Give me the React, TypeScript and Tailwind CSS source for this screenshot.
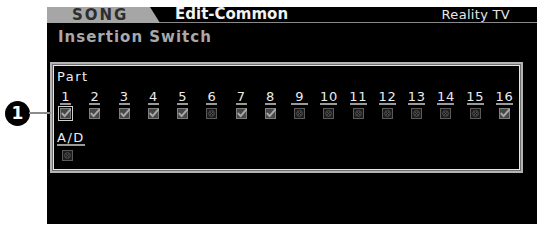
import React from "react";

const F = { fontFamily: '"DejaVu Sans", "Liberation Sans", sans-serif' };

function Check({ on, sel }: { on: boolean; sel?: boolean }) {
  return (
    <div className={sel ? "p-[1px] border-[1.5px] border-[#cfcfcf]" : "p-[1px]"}>
      <svg width="11" height="11" viewBox="0 0 11 11" className="block">
        {on ? (
          <>
            <rect x="0.5" y="0.5" width="10" height="10" fill="#474747" stroke="#7e7e7e" strokeWidth="1" />
            <path d="M2.4 5.6 L4.6 8.2 L10.4 1.4" fill="none" stroke="#a8a8a8" strokeWidth="1.9" strokeLinecap="round" strokeLinejoin="round" />
          </>
        ) : (
          <>
            <rect x="0.5" y="0.5" width="10" height="10" fill="#1c1c1c" stroke="#5a5a5a" strokeWidth="1" />
            <circle cx="5.5" cy="5.5" r="2.8" fill="none" stroke="#555" strokeWidth="1" />
            <path d="M4 4 L7 7 M7 4 L4 7" stroke="#555" strokeWidth="0.8" />
          </>
        )}
      </svg>
    </div>
  );
}

const parts = [1, 1, 1, 1, 1, 0, 1, 1, 0, 0, 0, 0, 0, 0, 0, 1];

export default function App() {
  return (
    <div className="relative w-[537px] h-[228px] bg-white overflow-hidden" style={F}>
      {/* callout */}
      <div className="absolute left-[5px] top-[101px] w-[25px] h-[25px] rounded-full bg-black flex items-center justify-center text-white font-bold text-[17px] leading-none">
        1
      </div>
      <div className="absolute left-[29px] top-[112px] w-[22px] h-[2px] bg-[#8c8c8c]" />

      <div className="ml-[47px] pt-[7px]">
        <div className="w-[490px] h-[217px] bg-black flex flex-col">
          {/* header */}
          <div className="h-[16px] flex items-stretch border-b border-[#8a8a8a]">
            <div className="w-[113px] h-[16px] bg-[#a6a6a6] [clip-path:polygon(0_0,103px_0,113px_100%,0_100%)] pl-[25px] text-[15px] leading-[16px] font-bold tracking-[2px] text-[#2e2e2e]">
              SONG
            </div>
            <div className="ml-[15px] text-[15px] leading-[15px] font-bold text-[#f2f2f2]">Edit-Common</div>
            <div className="ml-auto pr-[27px] text-[13px] leading-[15px] text-[#e6e6e6] tracking-[0.3px]">Reality TV</div>
          </div>

          <div className="mt-[7px] pl-[11px] text-[15px] leading-[15px] font-bold tracking-[1px] text-[#a9a9a9]">
            Insertion Switch
          </div>

          {/* frame */}
          <div className="mt-[17px] ml-[3px] w-[473px] h-[111px] border-2 border-[#b4b4b4]">
            <div className="w-full h-full border border-[#6e6e6e]">
              <div className="w-full h-full border border-[#e6e6e6] text-[#ececec]">
                <div className="pt-[4px] pl-[3px] text-[13px] leading-[13px] tracking-[1.5px]">Part</div>
                <div className="mt-[8px] ml-[-3px] flex">
                  {parts.map((on, i) => {
                    const n = i + 1;
                    return (
                      <div key={n} className="w-[29.3px] flex flex-col items-center">
                        <div className={n > 8 ? "w-[17px] flex flex-col items-center" : "w-[11px] flex flex-col items-center"}>
                          <span className="text-[13px] leading-[11px] tracking-[0.5px]">{n}</span>
                          <div className="w-full h-[2px] bg-[#9a9a9a] mt-[1px]" />
                        </div>
                        <div className={n === 1 ? "mt-[1px]" : "mt-[2px]"}>
                          <Check on={!!on} sel={n === 1} />
                        </div>
                      </div>
                    );
                  })}
                </div>
                <div className="mt-[11px] pl-[3px] flex flex-col items-start">
                  <div className="flex flex-col">
                    <span className="text-[13px] leading-[11px] tracking-[1.5px]">A/D</span>
                    <div className="w-full h-[2px] bg-[#9a9a9a] mt-[1px]" />
                  </div>
                  <div className="mt-[3px] ml-[4px]">
                    <Check on={false} />
                  </div>
                </div>
              </div>
            </div>
          </div>
        </div>
      </div>
    </div>
  );
}
